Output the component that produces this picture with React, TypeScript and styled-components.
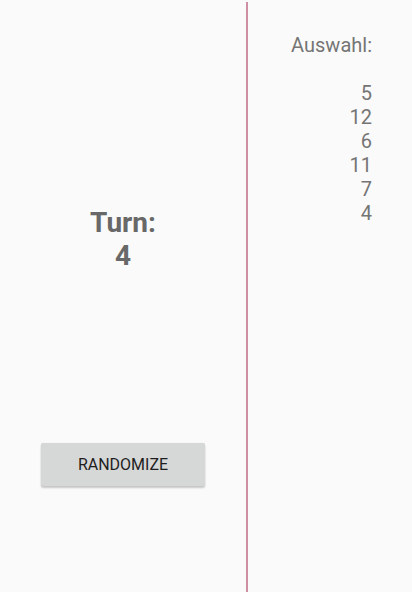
import styled, { createGlobalStyle } from "styled-components";

const GlobalStyle = createGlobalStyle`
  html, body {
    margin: 0;
    padding: 0;
    background: #fafafa;
    font-family: Roboto, "Noto Sans", Arial, sans-serif;
  }
`;

const Screen = styled.div`
  width: 412px;
  height: 592px;
  display: flex;
  background: #fafafa;
  overflow: hidden;
`;

const LeftPane = styled.div`
  width: 246px;
  display: flex;
  flex-direction: column;
  align-items: center;
  padding-top: 206px;
  box-sizing: border-box;
`;

const Divider = styled.div`
  width: 2px;
  margin-top: 2px;
  background: #cf8fa3;
`;

const RightPane = styled.div`
  flex: 1;
  display: flex;
  flex-direction: column;
  align-items: flex-end;
  padding: 33px 40px 0 0;
  box-sizing: border-box;
`;

const TurnLabel = styled.div`
  font-size: 28px;
  font-weight: 700;
  color: #686868;
  text-align: center;
  line-height: 33px;
`;

const RandomButton = styled.button`
  margin-top: 171px;
  width: 164px;
  height: 43px;
  border: none;
  border-radius: 2px;
  background: #d6d7d7;
  box-shadow: 0 2px 2px rgba(0, 0, 0, 0.2), 0 0 1px rgba(0, 0, 0, 0.12);
  font-family: Roboto, "Noto Sans", Arial, sans-serif;
  font-size: 16px;
  font-weight: 400;
  color: #1e1e1e;
  text-transform: uppercase;
  cursor: pointer;
`;

const Heading = styled.div`
  font-size: 20px;
  color: #757575;
  line-height: 24px;
  margin-bottom: 24px;
`;

const Pick = styled.div`
  font-size: 20px;
  color: #757575;
  line-height: 24px;
  text-align: right;
`;

const picks = [5, 12, 6, 11, 7, 4];

export default function App() {
  return (
    <>
      <GlobalStyle />
      <Screen>
        <LeftPane>
          <TurnLabel>
            Turn:
            <br />4
          </TurnLabel>
          <RandomButton>Randomize</RandomButton>
        </LeftPane>
        <Divider />
        <RightPane>
          <Heading>Auswahl:</Heading>
          {picks.map((n, i) => (
            <Pick key={i}>{n}</Pick>
          ))}
        </RightPane>
      </Screen>
    </>
  );
}
